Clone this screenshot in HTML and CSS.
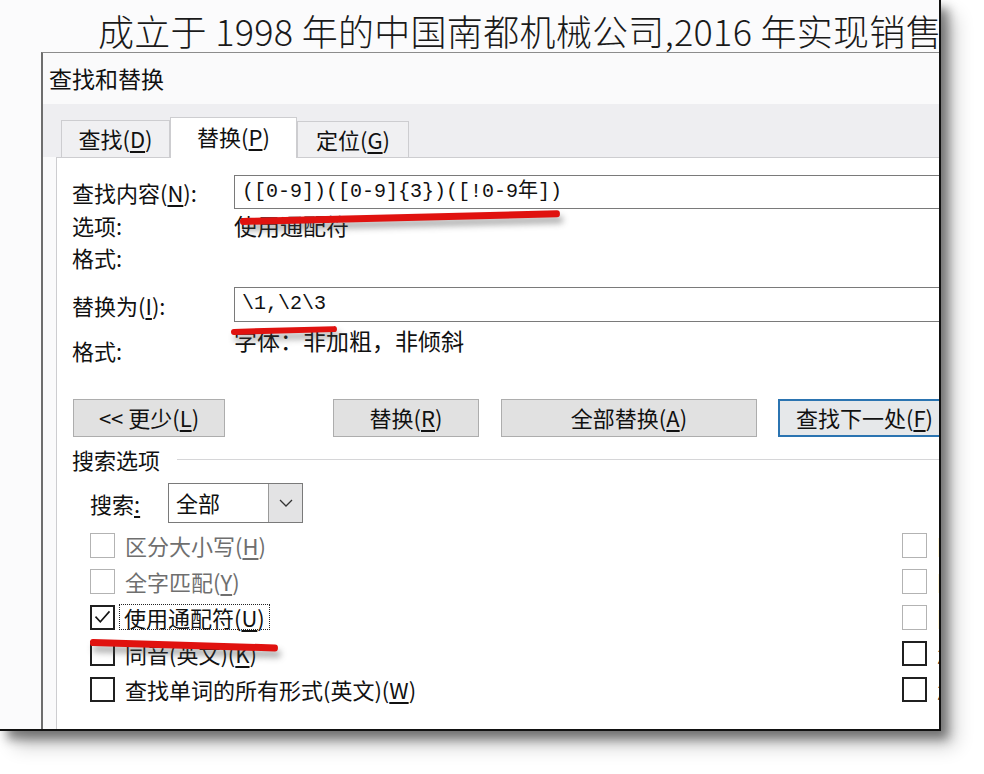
FILE: index.html
```html
<!DOCTYPE html>
<html lang="zh-CN">
<head>
    <meta charset="UTF-8">
    <title>查找和替换</title>
    <link rel="stylesheet" href="styles.css">
</head>
<body>
    <div class="shot">
        <p class="doc-line">成立于 1998 年的中国南都机械公司,2016 年实现销售</p>

        <div class="dialog">
            <div class="titlebar">查找和替换</div>

            <div class="tabs">
                <div class="tab">查找(<u>D</u>)</div>
                <div class="tab active">替换(<u>P</u>)</div>
                <div class="tab last">定位(<u>G</u>)</div>
            </div>

            <div class="panel">
                <div class="field">
                    <span class="lbl">查找内容(<u>N</u>):</span>
                    <div class="box">([0-9])([0-9]{3})([!0-9年])</div>
                </div>
                <div class="info"><span class="lbl">选项:</span><span class="val">使用通配符</span></div>
                <div class="info"><span class="lbl">格式:</span></div>

                <div class="field replace">
                    <span class="lbl">替换为(<u>I</u>):</span>
                    <div class="box">\1,\2\3</div>
                </div>
                <div class="fmt"><span class="lbl">格式:</span><span class="val">字体：非加粗，非倾斜</span></div>

                <div class="buttons">
                    <div class="btn less">&lt;&lt; 更少(<u>L</u>)</div>
                    <div class="btn one">替换(<u>R</u>)</div>
                    <div class="btn all">全部替换(<u>A</u>)</div>
                    <div class="btn next">查找下一处(<u>F</u>)</div>
                </div>

                <div class="group-title"><span>搜索选项</span><div class="rule"></div></div>

                <div class="search-row">
                    <span class="search-lbl">搜索<u>:</u></span>
                    <div class="select">
                        <span>全部</span>
                        <div class="arrow">
                            <svg width="14" height="8" viewBox="0 0 14 8"><polyline points="1,1 7,7 13,1" fill="none" stroke="#333" stroke-width="1.3"/></svg>
                        </div>
                    </div>
                </div>

                <div class="checks">
                    <label class="check off"><i></i><span>区分大小写(<u>H</u>)</span></label>
                    <label class="check off"><i></i><span>区分前缀(<u>X</u>)</span></label>
                    <label class="check off"><i></i><span>全字匹配(<u>Y</u>)</span></label>
                    <label class="check off"><i></i><span>区分后缀(<u>T</u>)</span></label>
                    <label class="check focus"><i><svg viewBox="0 0 24 24"><polyline points="4,11 9.5,17 20,5" fill="none" stroke="#111" stroke-width="1.8"/></svg></i><span>使用通配符(<u>U</u>)</span></label>
                    <label class="check off"><i></i><span>区分全/半角(<u>M</u>)</span></label>
                    <label class="check"><i></i><span>同音(英文)(<u>K</u>)</span></label>
                    <label class="check"><i></i><span>忽略标点符号(<u>S</u>)</span></label>
                    <label class="check"><i></i><span>查找单词的所有形式(英文)(<u>W</u>)</span></label>
                    <label class="check"><i></i><span>忽略空格(<u>W</u>)</span></label>
                </div>
            </div>
        </div>

        <!-- red pen marks drawn over the screenshot -->
        <div class="mark mark-find"></div>
        <div class="mark mark-replace"></div>
        <div class="mark mark-wild"></div>
    </div>
</body>
</html>
```

FILE: styles.css
```css
* {
    box-sizing: border-box;
    margin: 0;
    padding: 0;
}

html,
body {
    min-height: 100vh;
}

body {
    background: #fff;
    font-family: "Noto Sans CJK SC", "Noto Sans", sans-serif;
    color: #111;
}

u {
    text-underline-offset: 3px;
}

.shot {
    position: relative;
    width: 941px;
    height: 731px;
    border-right: 2px solid #111;
    border-bottom: 2px solid #111;
    background: #fbfbfc;
    box-shadow: 7px 8px 10px rgba(0, 0, 0, 0.45), 14px 15px 18px rgba(0, 0, 0, 0.2);
    overflow: hidden;
    display: flex;
    flex-direction: column;
}

.doc-line {
    flex-shrink: 0;
    height: 52px;
    padding: 8px 0 0 98px;
    font-size: 36px;
    font-weight: 300;
    line-height: 44px;
    letter-spacing: 0.3px;
    color: #1a1a1a;
    white-space: nowrap;
}

.dialog {
    flex: 1;
    width: 1040px;
    margin-left: 41px;
    border-left: 2px solid #6e6e6e;
    border-top: 1px solid #8c8c8c;
    background: #fafafb;
    display: flex;
    flex-direction: column;
}

.titlebar {
    height: 51px;
    padding-left: 6px;
    font-size: 23px;
    line-height: 50px;
}

.tabs {
    height: 53px;
    padding-left: 18px;
    background: #eeeef1;
    display: flex;
    align-items: flex-end;
}

.tab {
    width: 109px;
    height: 37px;
    border: 1px solid #cdcdd0;
    border-bottom: none;
    background: #f0f0f2;
    font-size: 22px;
    line-height: 35px;
    text-align: center;
}

.tab.active {
    position: relative;
    z-index: 1;
    width: 127px;
    height: 41px;
    margin-bottom: -1px;
    background: #fff;
    line-height: 36px;
}

.tab.last {
    width: 112px;
    height: 36px;
}

.panel {
    flex: 1;
    margin-left: 13px;
    padding: 17px 0 0 15px;
    background: #fff;
    border-left: 1px solid #cdcdd0;
    border-top: 1px solid #cdcdd0;
    font-size: 22px;
}

.lbl {
    flex-shrink: 0;
    width: 162px;
}

.val {
    font-size: 23px;
}

.field {
    display: flex;
    align-items: center;
    height: 34px;
}

.field.replace {
    height: 35px;
    margin-top: 14px;
}

.box {
    flex: 1;
    height: 100%;
    padding-left: 7px;
    border: 1px solid #7a7a7a;
    background: #fff;
    font-family: "Liberation Mono", "Noto Sans CJK SC", monospace;
    font-size: 20px;
    line-height: 32px;
}

.info {
    display: flex;
    height: 32px;
    line-height: 32px;
}

.fmt {
    display: flex;
    margin-top: 2px;
    line-height: 32px;
}

.fmt .lbl {
    padding-top: 10px;
}

.buttons {
    display: flex;
    margin-top: 33px;
    padding-left: 1px;
}

.btn {
    flex-shrink: 0;
    height: 38px;
    border: 1px solid #adadad;
    background: #e1e1e1;
    line-height: 35px;
    text-align: center;
    white-space: nowrap;
}

.btn.less {
    width: 152px;
}

.btn.one {
    width: 146px;
    margin-left: 108px;
}

.btn.all {
    width: 256px;
    margin-left: 22px;
}

.btn.next {
    width: 173px;
    margin-left: 21px;
    border: 2px solid #2b74b1;
    background: #e6e8ea;
    line-height: 33px;
}

.group-title {
    display: flex;
    align-items: center;
    height: 36px;
    margin-top: 4px;
}

.group-title .rule {
    flex: 1;
    height: 1px;
    margin-left: 17px;
    background: #d6d6d8;
}

.search-row {
    display: flex;
    align-items: center;
    height: 40px;
    margin-top: 6px;
    padding-left: 18px;
}

.search-lbl {
    width: 78px;
}

.select {
    width: 135px;
    height: 40px;
    border: 1px solid #7a7a7a;
    background: #fff;
    display: flex;
}

.select span {
    flex: 1;
    padding-left: 7px;
    line-height: 37px;
}

.select .arrow {
    width: 34px;
    border-left: 1px solid #9a9a9a;
    background: #e3e3e4;
    display: flex;
    align-items: center;
    justify-content: center;
}

.checks {
    display: grid;
    grid-template-columns: 812px auto;
    grid-auto-rows: 36px;
    margin-top: 4px;
    padding-left: 18px;
}

.check {
    display: flex;
    align-items: center;
    gap: 10px;
    white-space: nowrap;
}

.check i {
    flex-shrink: 0;
    width: 25px;
    height: 25px;
    border: 2px solid #202020;
    background: #fff;
    display: flex;
}

.check i svg {
    width: 100%;
    height: 100%;
}

.check.off {
    color: #6f6f6f;
}

.check.off i {
    border: 1px solid #b3b3b3;
}

.check.focus span {
    margin-left: -5px;
    padding: 0 4px;
    line-height: 24px;
    outline: 1px dotted #222;
}

.mark {
    position: absolute;
    height: 6px;
    border-radius: 3px;
    background: #e0120f;
    transform-origin: left center;
    box-shadow: 3px 6px 6px rgba(70, 70, 70, 0.45);
}

.mark-find {
    left: 240px;
    top: 218px;
    width: 320px;
    height: 7px;
    transform: rotate(-1.4deg);
}

.mark-replace {
    left: 231px;
    top: 329px;
    width: 106px;
    transform: rotate(-1.6deg);
}

.mark-wild {
    left: 90px;
    top: 639px;
    width: 188px;
    height: 7px;
    transform: rotate(1.7deg);
}
```
